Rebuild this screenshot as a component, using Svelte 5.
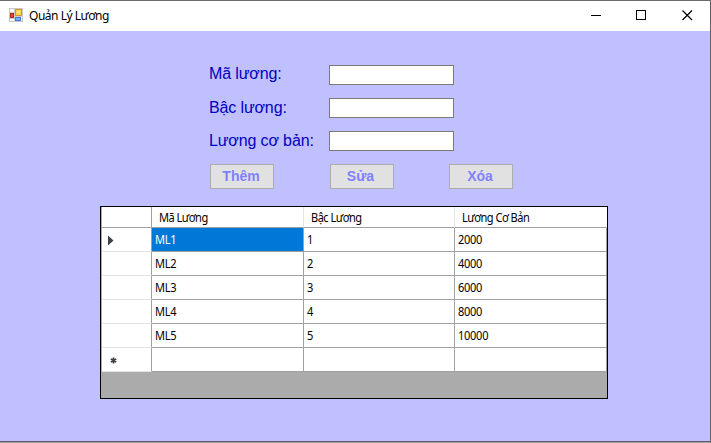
<script>
  const fields = [
    { id: 'ma', label: 'Mã lương:' },
    { id: 'bac', label: 'Bậc lương:' },
    { id: 'coban', label: 'Lương cơ bản:' }
  ];
  const actions = ['Thêm', 'Sửa', 'Xóa'];
  const columns = ['Mã Lương', 'Bậc Lương', 'Lương Cơ Bản'];
  const rows = [
    ['ML1', '1', '2000'],
    ['ML2', '2', '4000'],
    ['ML3', '3', '6000'],
    ['ML4', '4', '8000'],
    ['ML5', '5', '10000'],
    ['', '', '']
  ];
</script>

<div class="window">
  <header class="titlebar">
    <svg class="app-icon" width="14" height="14" viewBox="0 0 14 14">
      <rect x="0.5" y="0.5" width="13" height="13" fill="#f8f8f8" stroke="#c8c8c8" />
      <path d="M5.5 1v12M1 4.5h4M1 10.5h4M6 8.5h7" stroke="#d0d0d0" />
      <rect x="6.5" y="1.5" width="6" height="6" fill="#fad24e" stroke="#cf9a2c" />
      <rect x="8" y="3" width="3" height="2" fill="#ffe99a" />
      <rect x="1.5" y="5.5" width="3" height="4" fill="#e2503e" stroke="#a8241c" />
      <rect x="6.5" y="9.5" width="5" height="3" fill="#7fb0fa" stroke="#4478d6" />
    </svg>
    <h1>Quản Lý Lương</h1>
    <div class="controls">
      <svg width="46" height="30" viewBox="0 0 46 30"><path d="M18 14.5h10" /></svg>
      <svg width="46" height="30" viewBox="0 0 46 30"><rect x="17.5" y="9.5" width="9" height="9" /></svg>
      <svg class="close" width="46" height="30" viewBox="0 0 46 30"><path d="M17.5 9.5l9.5 9.5M27 9.5l-9.5 9.5" /></svg>
    </div>
  </header>

  <main>
    <form>
      {#each fields as field}
        <div class="field">
          <label for={field.id}>{field.label}</label>
          <input id={field.id} type="text" />
        </div>
      {/each}
      <div class="actions">
        {#each actions as action}
          <button type="button">{action}</button>
        {/each}
      </div>
    </form>

    <div class="grid">
      <div class="row head">
        <div class="marker"></div>
        {#each columns as column}
          <div class="cell"><span>{column}</span></div>
        {/each}
      </div>
      {#each rows as row, i}
        <div class="row">
          <div class="marker">
            {#if i === 0}
              <svg class="arrow" width="8" height="11" viewBox="0 0 8 11"><path d="M2 0.5v10l5.5-5z" fill="#404040" /></svg>
            {:else if i === rows.length - 1}
              <svg class="star" width="7" height="7" viewBox="0 0 7 7"><path d="M3.5 0.5v6M0.8 2l5.4 3M6.2 2l-5.4 3" stroke="#404040" stroke-width="1.8" /></svg>
            {/if}
          </div>
          {#each row as value, j}
            <div class="cell" class:selected={i === 0 && j === 0}><span>{value}</span></div>
          {/each}
        </div>
      {/each}
    </div>
  </main>
</div>

<style>
  .window {
    box-sizing: border-box;
    width: 711px;
    height: 443px;
    display: flex;
    flex-direction: column;
    border-top: 1px solid #6b6b6b;
    border-right: 1px solid #606066;
    border-bottom: 1px solid #a2a2a2;
    background: #c0c0ff;
    overflow: hidden;
  }
  .titlebar {
    height: 30px;
    flex: none;
    display: flex;
    align-items: center;
    padding-left: 9px;
    background: #fff;
  }
  .app-icon { margin-top: -2px; }
  h1 {
    margin: 0 0 0 6px;
    font: 400 12px/16px 'Noto Sans', sans-serif;
    letter-spacing: -0.48px;
    white-space: nowrap;
    color: #000;
  }
  .controls {
    display: flex;
    margin-left: auto;
    margin-right: -1px;
  }
  .controls svg {
    fill: none;
    stroke: #000;
    stroke-width: 1;
  }
  .controls .close { stroke-width: 1.2; }
  main {
    flex: 1;
    display: flex;
    flex-direction: column;
    padding: 34px 0 0 100px;
    border-bottom: 1px solid #5c5c66;
  }
  form { padding-left: 109px; }
  .field {
    display: flex;
    height: 20px;
    margin-bottom: 13px;
  }
  label {
    width: 120px;
    font: 16px/18px 'Liberation Sans', Arial, sans-serif;
    letter-spacing: -0.13px;
    white-space: nowrap;
    color: #0000c0;
  }
  .field + .field label { line-height: 20px; }
  input {
    box-sizing: border-box;
    width: 125px;
    height: 20px;
    margin: 0;
    padding: 1px 3px;
    border: 1px solid #7a7a7a;
    border-radius: 0;
    background: #fff;
    outline: none;
  }
  .actions {
    display: flex;
    justify-content: space-between;
    width: 303px;
    padding-left: 1px;
  }
  button {
    box-sizing: border-box;
    width: 64px;
    height: 25px;
    padding: 0 2px 1px 0;
    border: 1px solid #adadad;
    border-radius: 0;
    background: #e1e1e1;
    font: bold 14px/20px 'Liberation Sans', Arial, sans-serif;
    color: #8080ff;
  }
  .grid {
    box-sizing: border-box;
    width: 508px;
    height: 193px;
    margin-top: 17px;
    padding-left: 1px;
    border: 1px solid #000;
    background: #ababab;
    font: 12px/16px 'Noto Sans', sans-serif;
    letter-spacing: -0.3px;
    color: #000;
  }
  .row {
    display: grid;
    grid-template-columns: 50px 152px 151px 152px;
    height: 24px;
  }
  .row.head { height: 21px; }
  .marker, .cell {
    box-sizing: border-box;
    display: flex;
    align-items: center;
    background: #fff;
    border-right: 1px solid #a0a0a0;
    border-bottom: 1px solid #a0a0a0;
  }
  .marker {
    padding-left: 4px;
    border-bottom-color: #e3e3e3;
  }
  .arrow { margin-top: 2px; }
  .star { margin-left: 4px; margin-top: 2px; }
  .cell { padding-left: 3px; white-space: nowrap; }
  .cell span {
    display: inline-block;
    transform: scaleX(0.92);
    transform-origin: 0 50%;
  }
  .selected { background: #0078d7; color: #fff; }
  .head .cell {
    padding-top: 2px;
    padding-left: 7px;
    border-right-color: #e5e5e5;
    letter-spacing: -0.55px;
  }
  .head .cell:last-child { border-right-color: #fff; }
  .head .marker { border-bottom-color: #a0a0a0; }
</style>
